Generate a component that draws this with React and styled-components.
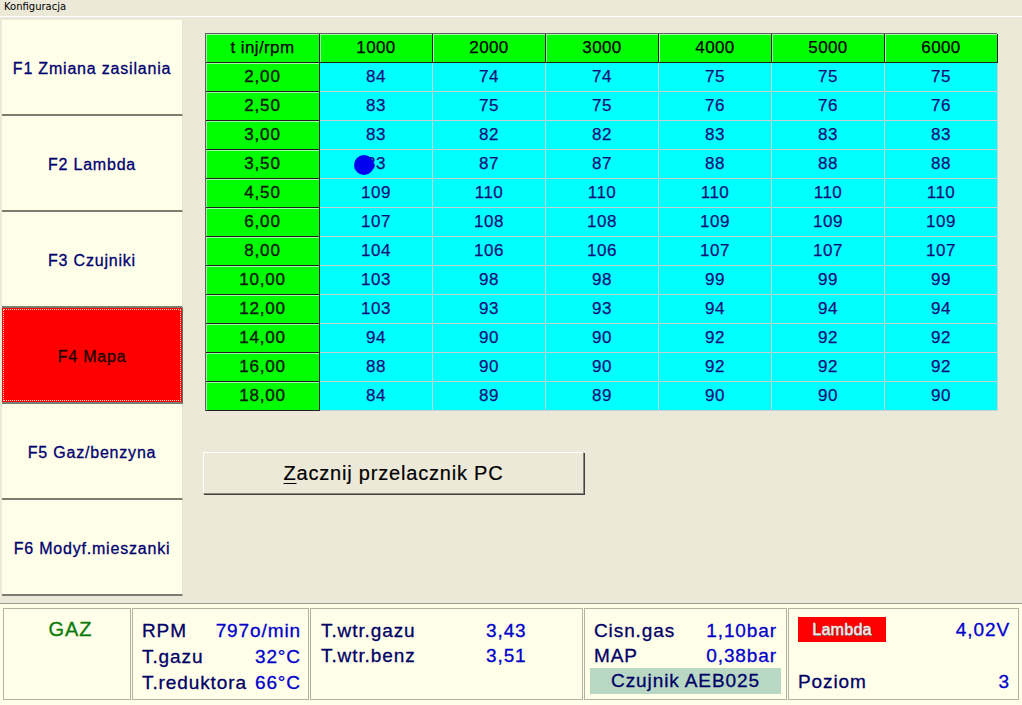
import React from 'react';
import styled, {createGlobalStyle} from 'styled-components';

const GlobalStyle = createGlobalStyle`
    html, body {
        margin: 0;
        padding: 0;
        background: #ece9d8;
        font-family: "Liberation Sans", Arial, sans-serif;
    }
`;

const rpms = ['1000', '2000', '3000', '4000', '5000', '6000'];

const rows = [
    ['2,00', [84, 74, 74, 75, 75, 75]],
    ['2,50', [83, 75, 75, 76, 76, 76]],
    ['3,00', [83, 82, 82, 83, 83, 83]],
    ['3,50', [83, 87, 87, 88, 88, 88]],
    ['4,50', [109, 110, 110, 110, 110, 110]],
    ['6,00', [107, 108, 108, 109, 109, 109]],
    ['8,00', [104, 106, 106, 107, 107, 107]],
    ['10,00', [103, 98, 98, 99, 99, 99]],
    ['12,00', [103, 93, 93, 94, 94, 94]],
    ['14,00', [94, 90, 90, 92, 92, 92]],
    ['16,00', [88, 90, 90, 92, 92, 92]],
    ['18,00', [84, 89, 89, 90, 90, 90]],
];

const menu = [
    'F1 Zmiana zasilania',
    'F2 Lambda',
    'F3 Czujniki',
    'F4 Mapa',
    'F5 Gaz/benzyna',
    'F6 Modyf.mieszanki',
];

const Window = styled.div`
    width: 1022px;
    height: 705px;
    display: flex;
    flex-direction: column;
    overflow: hidden;
    background: #ece9d8;
`;

const TitleBar = styled.div`
    height: 16px;
    padding-left: 4px;
    font-family: "DejaVu Sans", sans-serif;
    font-size: 10px;
    line-height: 14px;
    color: #000;
    background: #ece9d8;
    border-bottom: 1px solid #fff;
`;

const Body = styled.div`
    display: flex;
    padding-top: 3px;
    height: 580px;
`;

const Nav = styled.div`
    width: 181px;
    margin-left: 2px;
    display: flex;
    flex-direction: column;
`;

const NavButton = styled.div`
    height: 96px;
    box-sizing: border-box;
    position: relative;
    display: flex;
    align-items: center;
    justify-content: center;
    padding-top: 3px;
    font-size: 16px;
    letter-spacing: 0.8px;
    -webkit-text-stroke: 0.3px currentColor;
    color: ${p => (p.active ? '#200000' : '#000070')};
    background: ${p => (p.active ? '#ff0000' : '#fffee8')};
    border-bottom: 2px solid #7c7c70;
    border-right: 1px solid ${p => (p.active ? '#6a6a60' : '#e4e2d2')};
    ${p => p.active && `
        &::after {
            content: '';
            position: absolute;
            inset: 1px;
            border: 1px dotted #ffd0d0;
        }
    `}
`;

const Content = styled.div`
    flex: 1;
    padding: 13px 0 0 22px;
`;

const MapGrid = styled.div`
    display: grid;
    grid-template-columns: 114px repeat(6, 113px);
    grid-auto-rows: 29px;
    width: 792px;
    border-top: 1px solid #606060;
    border-left: 1px solid #606060;
    box-sizing: border-box;
`;

const HeadCell = styled.div`
    display: flex;
    align-items: center;
    justify-content: center;
    background: #00ff00;
    color: #000;
    font-size: 17px;
    letter-spacing: 0.4px;
    -webkit-text-stroke: 0.25px currentColor;
    border-right: 1px solid #202020;
    border-bottom: 1px solid #202020;
    box-shadow: inset 1px 1px 0 #a0ffa0;
`;

const RowCell = styled(HeadCell)`
    font-size: 17px;
    letter-spacing: 0.8px;
    -webkit-text-stroke: 0.4px currentColor;
    color: #101a10;
`;

const DataCell = styled.div`
    position: relative;
    display: flex;
    align-items: center;
    justify-content: center;
    background: #00ffff;
    color: #10107a;
    font-size: 17px;
    letter-spacing: 0.5px;
    -webkit-text-stroke: 0.25px currentColor;
    border-right: 1px solid #c4d4d4;
    border-bottom: 1px solid #c4d4d4;
`;

const Cursor = styled.span`
    position: absolute;
    left: 34px;
    top: 5px;
    width: 20px;
    height: 20px;
    border-radius: 50%;
    background: #0000ee;
`;

const StartButton = styled.button`
    display: block;
    margin: 41px 0 0 -2px;
    width: 381px;
    height: 42px;
    font-family: "Liberation Sans", Arial, sans-serif;
    font-size: 20px;
    letter-spacing: 0.8px;
    -webkit-text-stroke: 0.2px currentColor;
    color: #000;
    background: #ece9d8;
    border: 1px solid;
    border-color: #fff #8a887c #8a887c #fff;
    box-shadow: 1px 1px 0 #404040;
    u {
        text-decoration-thickness: 1px;
        text-underline-offset: 3px;
    }
`;

const StatusBar = styled.div`
    margin-top: 3px;
    flex: 1;
    background: #fffee8;
    border-top: 1px solid #9c9a90;
    padding: 4px 0 0 3px;
    display: grid;
    grid-template-columns: 128px 177px 273px 203px 231px;
    grid-template-rows: 92px;
    column-gap: 1px;
    font-size: 19px;
    letter-spacing: 0.9px;
    -webkit-text-stroke: 0.3px currentColor;
`;

const Panel = styled.div`
    border: 1px solid #b4b2a4;
    box-sizing: border-box;
    padding: ${p => p.pad || '8px 8px 0 9px'};
    display: flex;
    flex-direction: column;
`;

const GasLabel = styled.div`
    text-align: center;
    color: #0a7a0a;
    font-size: 20px;
    letter-spacing: 1px;
    line-height: 26px;
    margin-left: 6px;
`;

const Line = styled.div`
    display: grid;
    grid-template-columns: ${p => p.cols || '1fr auto'};
    line-height: 25px;
    height: ${p => p.h || '25px'};
    align-items: ${p => p.top ? 'start' : 'center'};
`;

const Label = styled.span`
    color: #000066;
    white-space: nowrap;
`;

const Value = styled.span`
    color: #0000cc;
    text-align: ${p => p.align || 'right'};
    white-space: nowrap;
`;

const SensorBox = styled.div`
    margin: 0 -4px 0 -4px;
    height: 26px;
    line-height: 26px;
    text-align: center;
    background: #b8d8c4;
    color: #000066;
`;

const LambdaBox = styled.span`
    display: inline-block;
    width: 88px;
    height: 25px;
    line-height: 25px;
    text-align: center;
    background: #ff0000;
    color: #f0ecec;
    font-size: 16px;
    letter-spacing: 0.3px;
    -webkit-text-stroke: 0.4px #f0ecec;
    text-shadow: 1px 1px 0 #6a6a6a;
`;

const App = () => (
    <Window>
        <GlobalStyle />
        <TitleBar>Konfiguracja</TitleBar>
        <Body>
            <Nav>
                {menu.map(item => (
                    <NavButton key={item} active={item === 'F4 Mapa'}>{item}</NavButton>
                ))}
            </Nav>
            <Content>
                <MapGrid>
                    <HeadCell>t inj/rpm</HeadCell>
                    {rpms.map(r => <HeadCell key={r}>{r}</HeadCell>)}
                    {rows.map(([t, vals], ri) => (
                        <React.Fragment key={t}>
                            <RowCell>{t}</RowCell>
                            {vals.map((v, ci) => (
                                <DataCell key={ci}>
                                    {v}
                                    {ri === 3 && ci === 0 && <Cursor />}
                                </DataCell>
                            ))}
                        </React.Fragment>
                    ))}
                </MapGrid>
                <StartButton><u>Z</u>acznij przelacznik PC</StartButton>
            </Content>
        </Body>
        <StatusBar>
            <Panel pad='7px 8px 0 9px'>
                <GasLabel>GAZ</GasLabel>
            </Panel>
            <Panel pad='8px 7px 0 9px'>
                <Line h='26px'><Label>RPM</Label><Value>797o/min</Value></Line>
                <Line h='26px'><Label>T.gazu</Label><Value>32°C</Value></Line>
                <Line h='26px'><Label>T.reduktora</Label><Value>66°C</Value></Line>
            </Panel>
            <Panel pad='9px 8px 0 10px'>
                <Line cols='165px auto'><Label>T.wtr.gazu</Label><Value align='left'>3,43</Value></Line>
                <Line cols='165px auto'><Label>T.wtr.benz</Label><Value align='left'>3,51</Value></Line>
            </Panel>
            <Panel pad='9px 9px 0 9px'>
                <Line><Label>Cisn.gas</Label><Value>1,10bar</Value></Line>
                <Line><Label>MAP</Label><Value>0,38bar</Value></Line>
                <SensorBox>Czujnik AEB025</SensorBox>
            </Panel>
            <Panel pad='8px 8px 0 9px'>
                <Line h='52px' top><LambdaBox>Lambda</LambdaBox><Value>4,02V</Value></Line>
                <Line><Label>Poziom</Label><Value>3</Value></Line>
            </Panel>
        </StatusBar>
    </Window>
);

export default App;
